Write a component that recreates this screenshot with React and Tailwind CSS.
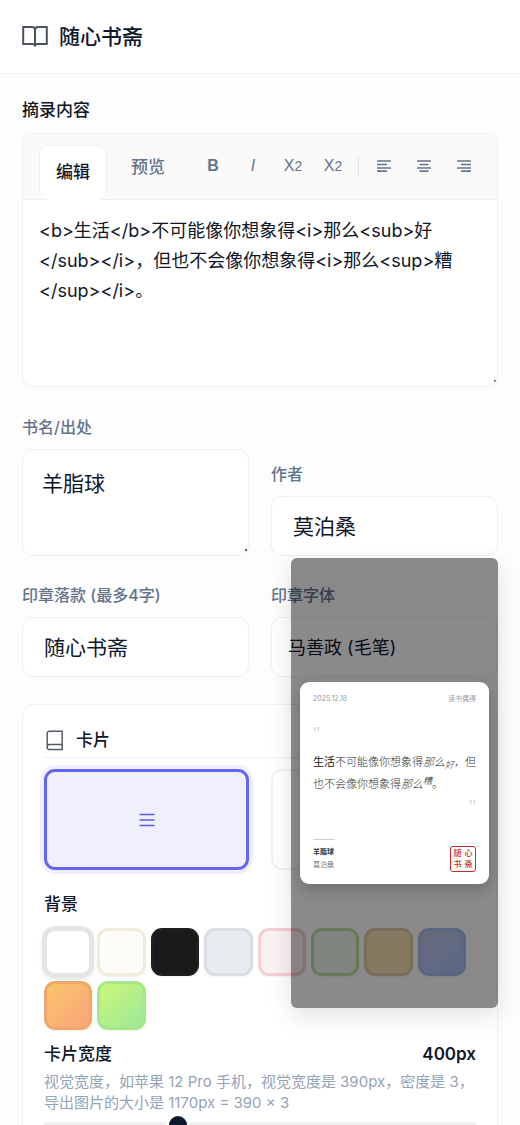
import { useState } from "react";

const swatches = [
  { name: "纯白", look: "bg-white border-[#e5e5e7] ring-2 ring-[#e5e5e7] shadow-[0_3px_6px_rgba(0,0,0,0.12)]" },
  { name: "米白", look: "bg-[#fdfcf8] border-[#f0ecdc]" },
  { name: "墨黑", look: "bg-[#1a1a1a] border-[#1f1f1f]" },
  { name: "浅灰", look: "bg-[#e9ecef] border-[#d8dde6]" },
  { name: "淡粉", look: "bg-[#fbf1f2] border-[#f8cdd3]" },
  { name: "浅绿", look: "bg-[#ecf5ec] border-[#bfe0a5]" },
  { name: "暖黄", look: "bg-[#f5e0b4] border-[#dccba4]" },
  { name: "蓝紫", look: "bg-linear-135 from-[#c4bfe4] via-[#b4c4f0] to-[#a2c0f5] border-[#a3bdf0]" },
  { name: "橙色", look: "bg-linear-135 from-[#f8c864] to-[#fba07e] border-[#f0a868]" },
  { name: "青绿", look: "bg-linear-135 from-[#cff774] to-[#97e69b] border-[#a5e789]" },
];

const quote =
  "<b>生活</b>不可能像你想象得<i>那么<sub>好</sub></i>，但也不会像你想象得<i>那么<sup>糟</sup></i>。";

const fieldBox =
  "block w-full rounded-[11px] border border-[#f0f0f1] bg-white text-[21px] leading-8 text-[#0f172a] outline-none";

const gripDot =
  "resize-y [&::-webkit-resizer]:bg-[radial-gradient(circle_at_13px_10px,#666_1px,transparent_1px)]";

function OpenBook() {
  return (
    <svg className="h-7 w-[26px]" viewBox="0 0 26 28" fill="none" stroke="#4b5260" strokeWidth="2" aria-hidden="true">
      <path d="M1.2 4h8.8c1.8 0 3 1 3 3v16.4c0-1.5-1-2.4-2.6-2.4H1.2zM24.8 4H16c-1.8 0-3 1-3 3v16.4c0-1.5 1-2.4 2.6-2.4h9.2z" />
    </svg>
  );
}

function ClosedBook() {
  return (
    <svg className="h-[21px] w-[18px]" viewBox="0 0 18 21" fill="none" stroke="#555b68" strokeWidth="1.5" aria-hidden="true">
      <path d="M3.4 1.2h12.8v18.4H3.4A2.2 2.2 0 0 1 1.2 17.4V3.4a2.2 2.2 0 0 1 2.2-2.2zM1.2 17A2.3 2.3 0 0 1 3.4 14.6h12.8" />
    </svg>
  );
}

function Align({ d }) {
  return (
    <svg className="h-4 w-4" viewBox="0 0 16 16" fill="none" stroke="#64748b" strokeWidth="1.7" aria-hidden="true">
      <path d={d} />
    </svg>
  );
}

function Tool({ label, children }) {
  return (
    <button
      type="button"
      aria-label={label}
      className="flex h-8 w-10 items-center justify-center font-['Liberation_Sans',sans-serif] text-[#64748b]"
    >
      {children}
    </button>
  );
}

function Field({ id, label, children }) {
  return (
    <div className="flex flex-col justify-end gap-2.5">
      <label htmlFor={id} className="text-base leading-6 font-medium text-[#64748b]">
        {label}
      </label>
      {children}
    </div>
  );
}

function PreviewCard() {
  return (
    <aside className="absolute top-[558px] right-[22px] flex h-[450px] w-[207px] flex-col justify-center rounded-md bg-black/46 px-[9px] shadow-[0_8px_24px_rgba(0,0,0,0.12)]">
      <article className="flex h-[202px] flex-col rounded-[9px] bg-white px-[13px] py-3 font-['Liberation_Serif','Noto_Sans_CJK_SC',serif] text-[#333] shadow-[0_6px_14px_rgba(0,0,0,0.2)]">
        <div className="flex justify-between font-['Inter','Noto_Sans_CJK_SC',sans-serif] text-[7px] leading-[10px] text-[#9a9a9a]">
          <time>2025.12.18</time>
          <span>读书偶得</span>
        </div>
        <div className="mt-5 text-[18px] leading-5 text-[#d4d4d4]">"</div>
        <p className="mt-[7px] text-[11px] leading-[22px] font-light">
          <b className="text-[#111]">生活</b>不可能像你想象得
          <i>
            那么<sub className="text-[9px] leading-none">好</sub>
          </i>
          ，但也不会像你想象得
          <i>
            那么<sup className="text-[9px] leading-none">糟</sup>
          </i>
          。
        </p>
        <div className="mt-1 text-right text-[18px] leading-4 text-[#d4d4d4]">"</div>
        <footer className="mt-auto flex items-end justify-between">
          <div className="text-[7px] leading-[13px]">
            <div className="mb-1.5 h-px w-[22px] bg-[#ccc]" />
            <div className="font-bold">羊脂球</div>
            <div className="text-[#777]">莫泊桑</div>
          </div>
          <div className="grid h-[26px] w-[26px] grid-cols-2 place-items-center rounded-[3px] border border-[#c0322b] p-px text-[8px] leading-[10px] font-medium text-[#c0322b]">
            <span>随</span>
            <span>心</span>
            <span>书</span>
            <span>斋</span>
          </div>
        </footer>
      </article>
    </aside>
  );
}

export default function App() {
  const [text, setText] = useState(quote);
  const [width, setWidth] = useState(400);

  return (
    <div className="relative min-h-screen bg-[#fdfdfd] font-['Inter','Noto_Sans_CJK_SC',sans-serif] text-[#0f172a]">
      <header className="flex h-[74px] items-center gap-[11px] border-b border-[#f0f0f1] bg-white px-[22px]">
        <OpenBook />
        <h1 className="text-[21px] leading-8 font-medium">随心书斋</h1>
      </header>

      <main className="px-[22px] pt-[22px]">
        <label htmlFor="content" className="block text-[17px] leading-7 font-medium">
          摘录内容
        </label>

        <section className="mt-[9px] overflow-hidden rounded-[11px] border border-[#f0f0f1] bg-white">
          <div className="flex h-[66px] items-end border-b border-[#f0f0f1] bg-[#fafafa] pr-[13px] pl-4">
            <button type="button" className="-mb-px h-[55px] rounded-[9px] border border-b-0 border-[#f0f0f1] bg-white px-4 text-[17px] font-medium">
              编辑
            </button>
            <button type="button" className="h-[66px] px-6 pt-1 text-[17px] font-medium text-[#64748b]">
              预览
            </button>
            <div className="ml-auto flex h-[66px] items-center">
              <Tool label="粗体">
                <b className="text-base">B</b>
              </Tool>
              <Tool label="斜体">
                <i className="text-base">I</i>
              </Tool>
              <Tool label="下标">
                <span className="text-base">X</span>
                <span className="text-sm">2</span>
              </Tool>
              <Tool label="上标">
                <span className="text-base">X</span>
                <span className="text-sm">2</span>
              </Tool>
              <div className="mx-[5px] h-[19px] w-px bg-[#e5e7eb]" />
              <Tool label="左对齐">
                <Align d="M1 3h14M1 6.5h10M1 10h14M1 13.2h10" />
              </Tool>
              <Tool label="居中">
                <Align d="M1 3h14M3.5 6.5h9M1 10h14M3.5 13.2h9" />
              </Tool>
              <Tool label="右对齐">
                <Align d="M1 3h14M5 6.5h10M1 10h14M5 13.2h10" />
              </Tool>
            </div>
          </div>
          <textarea
            id="content"
            value={text}
            onChange={(e) => setText(e.target.value)}
            className={`block h-[186px] w-full rounded-b-[11px] p-4 text-lg leading-[30px] outline-none ${gripDot}`}
          />
        </section>

        <div className="mt-7 grid grid-cols-2 gap-x-[22px] gap-y-[27px]">
          <Field id="book" label="书名/出处">
            <textarea id="book" defaultValue="羊脂球" className={`${fieldBox} ${gripDot} h-[107px] px-[19px] py-[18px]`} />
          </Field>
          <Field id="author" label="作者">
            <input id="author" defaultValue="莫泊桑" className={`${fieldBox} h-[60px] px-[21px] pb-0.5`} />
          </Field>
          <Field id="seal" label="印章落款 (最多4字)">
            <input id="seal" maxLength={4} defaultValue="随心书斋" className={`${fieldBox} h-[60px] px-[21px] pb-0.5`} />
          </Field>
          <Field id="font" label="印章字体">
            <select
              id="font"
              className="block h-[60px] w-full appearance-none rounded-[11px] border border-[#f0f0f1] bg-white px-4 pt-0.5 text-lg leading-8 outline-none"
            >
              <option>马善政 (毛笔)</option>
            </select>
          </Field>
        </div>

        <section className="mt-[27px] rounded-[11px] border border-[#f0f0f1] bg-white px-[21px] pt-[18px] pb-6">
          <div className="flex h-[35px] items-center gap-3 border-b border-[#f0f0f1] pl-0.5">
            <ClosedBook />
            <h2 className="text-[17px] leading-7 font-medium">卡片</h2>
          </div>

          <div className="mt-[11px] grid grid-cols-2 gap-[22px]">
            <button
              type="button"
              aria-label="横排"
              className="flex h-[101px] items-center justify-center rounded-[11px] border-3 border-[#6366f1] bg-[#efeffd] ring-4 ring-[#efeffd]"
            >
              <svg className="h-4 w-4" viewBox="0 0 16 16" stroke="#5b5ef0" strokeWidth="1.5" aria-hidden="true">
                <path d="M.5 2.5h15M.5 8h15M.5 13.5h15" />
              </svg>
            </button>
            <button
              type="button"
              aria-label="竖排"
              className="flex h-[101px] items-center justify-center rounded-[11px] border-2 border-[#f2f2f3] bg-white"
            />
          </div>

          <h3 className="mt-5 text-[17px] leading-7 font-medium">背景</h3>
          <div className="mt-[10px] grid grid-cols-8 gap-[5px] pr-2.5">
            {swatches.map((s) => (
              <button
                key={s.name}
                type="button"
                aria-label={s.name}
                className={`aspect-square rounded-[11px] border-3 bg-origin-border shadow-[0_1px_2px_rgba(0,0,0,0.06)] ${s.look}`}
              />
            ))}
          </div>

          <div className="mt-[10px] flex items-center justify-between text-[17px] leading-7 font-medium">
            <label htmlFor="width">卡片宽度</label>
            <output htmlFor="width" className="font-semibold">
              {width}px
            </output>
          </div>
          <p className="mt-[3px] text-[15px] leading-[21px] text-[#94a3b8]">
            视觉宽度，如苹果 12 Pro 手机，视觉宽度是 390px，密度是 3，
            <br />
            导出图片的大小是 1170px = 390 × 3
          </p>
          <input
            id="width"
            type="range"
            min="280"
            max="680"
            value={width}
            onChange={(e) => setWidth(Number(e.target.value))}
            className="mt-[9px] block h-1.5 w-full appearance-none rounded-full bg-[#f0f0f1] [&::-webkit-slider-thumb]:h-6 [&::-webkit-slider-thumb]:w-6 [&::-webkit-slider-thumb]:appearance-none [&::-webkit-slider-thumb]:rounded-full [&::-webkit-slider-thumb]:border-3 [&::-webkit-slider-thumb]:border-white [&::-webkit-slider-thumb]:bg-[#0f172a]"
          />
        </section>
      </main>

      <PreviewCard />
    </div>
  );
}
